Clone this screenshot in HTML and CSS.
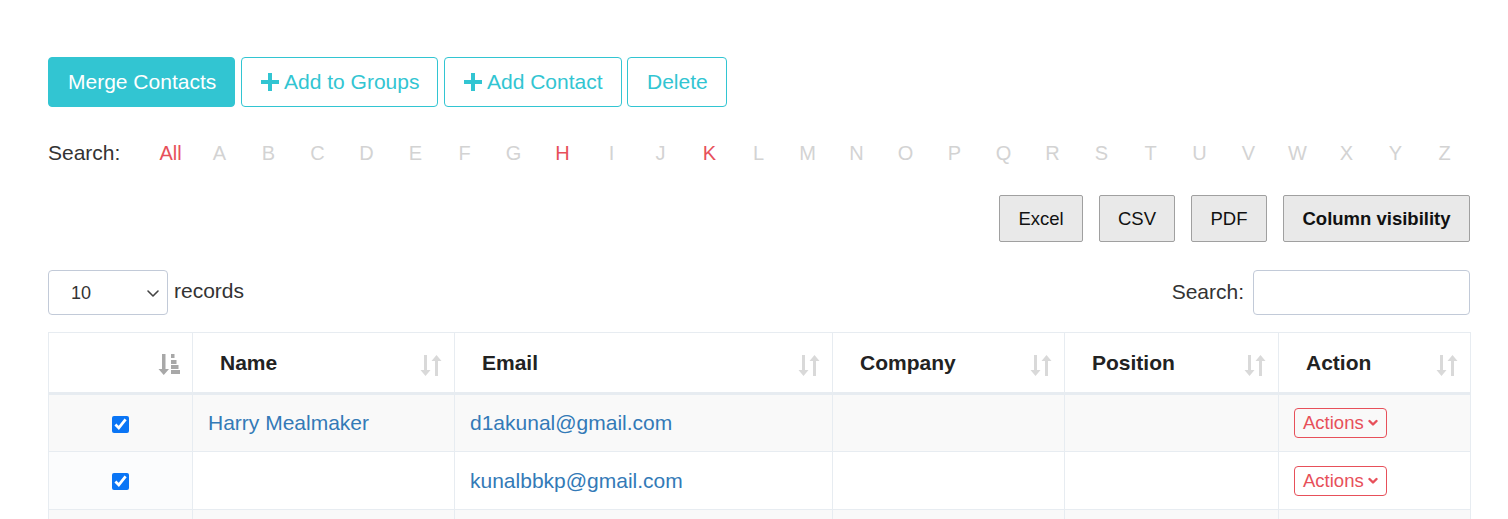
FILE: index.html
```html
<!DOCTYPE html>
<html>
<head>
<meta charset="utf-8">
<link rel="stylesheet" href="styles.css">
</head>
<body>
<div class="page">
  <div class="toolbar">
    <button class="btn btn-fill">Merge Contacts</button>
    <button class="btn btn-outline"><svg class="plus" viewBox="0 0 18 18"><path d="M7 0h4v7h7v4h-7v7H7v-7H0V7h7z"/></svg>Add to Groups</button>
    <button class="btn btn-outline"><svg class="plus" viewBox="0 0 18 18"><path d="M7 0h4v7h7v4h-7v7H7v-7H0V7h7z"/></svg>Add Contact</button>
    <button class="btn btn-outline">Delete</button>
  </div>

  <div class="alpha">
    <span class="alpha-label">Search:</span>
    <a class="letter on">All</a><a class="letter">A</a><a class="letter">B</a><a class="letter">C</a><a class="letter">D</a><a class="letter">E</a><a class="letter">F</a><a class="letter">G</a><a class="letter on">H</a><a class="letter">I</a><a class="letter">J</a><a class="letter on">K</a><a class="letter">L</a><a class="letter">M</a><a class="letter">N</a><a class="letter">O</a><a class="letter">P</a><a class="letter">Q</a><a class="letter">R</a><a class="letter">S</a><a class="letter">T</a><a class="letter">U</a><a class="letter">V</a><a class="letter">W</a><a class="letter">X</a><a class="letter">Y</a><a class="letter">Z</a>
  </div>

  <div class="exports">
    <button class="ebtn">Excel</button>
    <button class="ebtn">CSV</button>
    <button class="ebtn">PDF</button>
    <button class="ebtn bold">Column visibility</button>
  </div>

  <div class="controls">
    <div class="length">
      <div class="select"><span>10</span><svg viewBox="0 0 16 16" class="chev"><path d="M3 6l5 5 5-5" fill="none" stroke="#444" stroke-width="1.6" stroke-linecap="round" stroke-linejoin="round"/></svg></div>
      <span class="lbl">records</span>
    </div>
    <div class="filter">
      <span class="lbl">Search:</span>
      <div class="input"></div>
    </div>
  </div>

  <table class="grid">
    <colgroup>
      <col class="c1"><col class="c2"><col class="c3"><col class="c4"><col class="c5"><col class="c6">
    </colgroup>
    <thead>
      <tr>
        <th class="first"><svg class="sort dark" viewBox="0 0 22 24"><path d="M4 2h3.5v15H11l-5.25 6L0.5 17H4z"/><rect x="13" y="2" width="3.5" height="4"/><rect x="13" y="8" width="5.5" height="4"/><rect x="13" y="13" width="7.5" height="4"/><rect x="13" y="18" width="9" height="4"/></svg></th>
        <th><span>Name</span><svg class="sort" viewBox="0 0 22 24"><path d="M4 2h3v15h3.5l-5 6-5-6H4z"/><path d="M15 23h3V8h3.5l-5-6-5 6H15z"/></svg></th>
        <th><span>Email</span><svg class="sort" viewBox="0 0 22 24"><path d="M4 2h3v15h3.5l-5 6-5-6H4z"/><path d="M15 23h3V8h3.5l-5-6-5 6H15z"/></svg></th>
        <th><span>Company</span><svg class="sort" viewBox="0 0 22 24"><path d="M4 2h3v15h3.5l-5 6-5-6H4z"/><path d="M15 23h3V8h3.5l-5-6-5 6H15z"/></svg></th>
        <th><span>Position</span><svg class="sort" viewBox="0 0 22 24"><path d="M4 2h3v15h3.5l-5 6-5-6H4z"/><path d="M15 23h3V8h3.5l-5-6-5 6H15z"/></svg></th>
        <th><span>Action</span><svg class="sort" viewBox="0 0 22 24"><path d="M4 2h3v15h3.5l-5 6-5-6H4z"/><path d="M15 23h3V8h3.5l-5-6-5 6H15z"/></svg></th>
      </tr>
    </thead>
    <tbody>
      <tr class="odd">
        <td class="chk"><input type="checkbox" checked></td>
        <td><a class="link">Harry Mealmaker</a></td>
        <td><a class="link">d1akunal@gmail.com</a></td>
        <td></td>
        <td></td>
        <td><button class="act">Actions<svg viewBox="0 0 10 10" class="achev"><path d="M1.5 3l3.5 3.5L8.5 3" fill="none" stroke="#e7505a" stroke-width="2.4" stroke-linecap="round" stroke-linejoin="round"/></svg></button></td>
      </tr>
      <tr>
        <td class="chk"><input type="checkbox" checked></td>
        <td></td>
        <td><a class="link">kunalbbkp@gmail.com</a></td>
        <td></td>
        <td></td>
        <td><button class="act">Actions<svg viewBox="0 0 10 10" class="achev"><path d="M1.5 3l3.5 3.5L8.5 3" fill="none" stroke="#e7505a" stroke-width="2.4" stroke-linecap="round" stroke-linejoin="round"/></svg></button></td>
      </tr>
      <tr class="odd">
        <td class="chk"></td><td></td><td></td><td></td><td></td><td></td>
      </tr>
    </tbody>
  </table>
</div>
</body>
</html>
```

FILE: styles.css
```css
* { box-sizing: border-box; }
html, body { margin: 0; padding: 0; background: #fff; }
body {
  font-family: "Liberation Sans", Arial, sans-serif;
  color: #333;
  font-size: 21px;
  overflow: hidden;
}
.page {
  width: 1422px;
  margin-left: 48px;
  padding-top: 57px;
}
.toolbar {
  display: flex;
  gap: 6px;
}
.btn {
  height: 50px;
  border-radius: 4px;
  font-family: "Liberation Sans", Arial, sans-serif;
  font-size: 21px;
  padding: 0 0 0 19px;
  display: flex;
  align-items: center;
  border: 1px solid #32c5d2;
  cursor: pointer;
}
.btn-fill {
  background: #32c5d2;
  color: #fff;
}
.btn-outline {
  background: #fff;
  color: #32c5d2;
}
.plus {
  width: 18px;
  height: 18px;
  fill: #32c5d2;
  margin-right: 5px;
}
.toolbar .btn:nth-child(1) { width: 187px; }
.toolbar .btn:nth-child(2) { width: 197px; }
.toolbar .btn:nth-child(3) { width: 178px; }
.toolbar .btn:nth-child(4) { width: 100px; margin-left: -1px; }

.alpha {
  display: flex;
  align-items: center;
  margin-top: 34px;
  height: 24px;
}
.alpha-label {
  width: 98px;
  color: #333;
}
.letter {
  width: 49px;
  text-align: center;
  color: #d3d3d3;
  font-size: 20px;
}
.letter.on { color: #e7505a; }

.exports {
  display: flex;
  justify-content: flex-end;
  gap: 16px;
  margin-top: 30px;
}
.ebtn {
  height: 47px;
  background: #e9e9e9;
  border: 1px solid #a0a0a0;
  border-radius: 2px;
  font-family: "Liberation Sans", Arial, sans-serif;
  font-size: 18.5px;
  color: #111;
  padding: 0;
}
.ebtn:nth-child(1) { width: 84px; }
.ebtn:nth-child(2) { width: 76px; }
.ebtn:nth-child(3) { width: 76px; }
.ebtn:nth-child(4) { width: 187px; }
.ebtn.bold { font-weight: bold; }

.controls {
  display: flex;
  justify-content: space-between;
  align-items: center;
  margin-top: 28px;
}
.length, .filter {
  display: flex;
  align-items: center;
}
.select {
  width: 120px;
  height: 45px;
  border: 1px solid #c2cad8;
  border-radius: 4px;
  display: flex;
  align-items: center;
  justify-content: space-between;
  padding: 2px 6px 0 22px;
  font-size: 18px;
  color: #333;
}
.chev { width: 16px; height: 16px; margin-top: -2px; }
.length .lbl { margin-left: 6px; margin-top: -4px; }
.filter .lbl { margin-right: 9px; margin-top: -2px; }
.input {
  width: 217px;
  height: 45px;
  border: 1px solid #c2cad8;
  border-radius: 4px;
}

.grid {
  margin-top: 17px;
  width: 1422px;
  border-collapse: collapse;
  table-layout: fixed;
}
.c1 { width: 144px; }
.c2 { width: 262px; }
.c3 { width: 378px; }
.c4 { width: 232px; }
.c5 { width: 214px; }
.c6 { width: 192px; }
.grid th, .grid td {
  border: 1px solid #e7ecf1;
}
.grid th {
  height: 61px;
  text-align: left;
  font-weight: bold;
  font-size: 21px;
  color: #222;
  padding: 0 12px 0 27px;
  border-bottom: 3px solid #e7ecf1;
  position: relative;
}
.grid th span { display: inline-block; margin-top: 0; }
.sort {
  position: absolute;
  right: 12px;
  top: 20px;
  width: 22px;
  height: 24px;
  fill: #d9d9d9;
}
.sort.dark { fill: #a8a8a8; right: 12px; top: 19px; }
.grid td {
  height: 58px;
  padding: 0 15px;
  font-size: 21px;
}
.grid tbody tr.odd td { background: #f9f9f9; }
.grid tbody tr:nth-child(2) td.chk { background: #fbfcfd; }
.chk { text-align: center; }
.chk input {
  width: 17px;
  height: 17px;
  margin: 0;
  vertical-align: middle;
  accent-color: #0a75f5;
}
.link { color: #337ab7; }
.act {
  height: 30px;
  width: 93px;
  border: 1px solid #e7505a;
  background: transparent;
  color: #e7505a;
  border-radius: 4px;
  font-family: "Liberation Sans", Arial, sans-serif;
  font-size: 18.5px;
  padding: 0 0 0 8px;
  display: flex;
  align-items: center;
  gap: 4px;
}
.achev { width: 10px; height: 10px; }
```
